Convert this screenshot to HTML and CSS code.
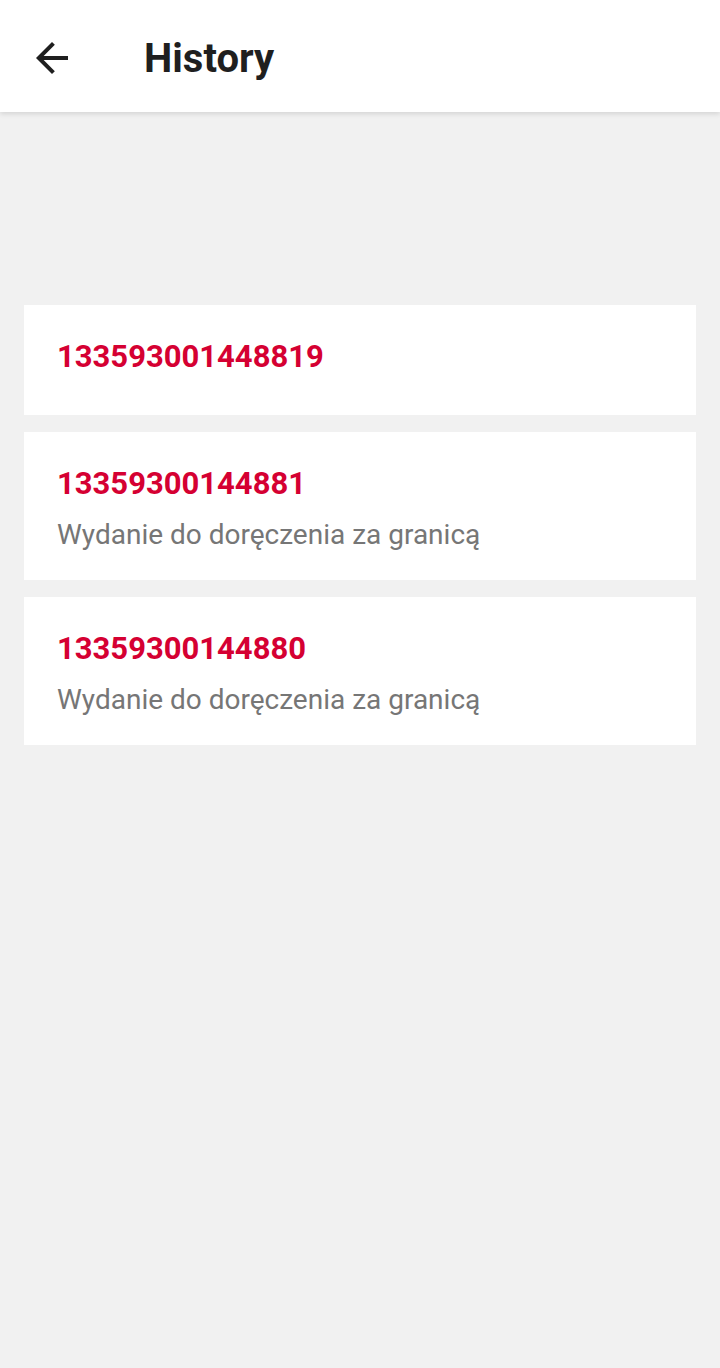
FILE: index.html
```html
<!DOCTYPE html>
<html>
<head>
    <title>History</title>
    <link rel="stylesheet" href="styles.css">
</head>
<body>

<div class="toolbar">
    <button class="back" aria-label="Back">
        <svg width="48" height="48" viewBox="0 0 24 24"><path d="M20 11H7.83l5.59-5.59L12 4l-8 8 8 8 1.41-1.41L7.83 13H20v-2z" fill="#1f1f1f"/></svg>
    </button>
    <h1 class="title">History</h1>
</div>

<div class="list">
    <div class="item">
        <div class="number">133593001448819</div>
    </div>
    <div class="item">
        <div class="number">13359300144881</div>
        <div class="status">Wydanie do doręczenia za granicą</div>
    </div>
    <div class="item">
        <div class="number">13359300144880</div>
        <div class="status">Wydanie do doręczenia za granicą</div>
    </div>
</div>

</body>
</html>
```

FILE: styles.css
```css
body { margin: 0; background-color: #f1f1f1; font-family: Roboto, "Liberation Sans", sans-serif; }
.toolbar { height: 112px; box-sizing: border-box; padding-top: 4px; background-color: #fff; display: flex; align-items: center; box-shadow: 0 2px 5px rgba(0,0,0,0.12); position: relative; }
.back { width: 56px; height: 56px; margin-left: 24px; padding: 0; border: none; background: none; display: flex; align-items: center; justify-content: center; }
.title { margin: 0 0 0 64px; font-size: 40px; font-weight: 700; color: #1f1f1f; }
.list { padding: 193px 24px 0; display: flex; flex-direction: column; gap: 17px; }
.item { background-color: #fff; padding: 31px 33px 28px; min-height: 110px; box-sizing: border-box; }
.number { font-size: 31px; font-weight: 700; color: #d50032; line-height: 42px; }
.status { font-size: 28px; color: #767676; line-height: 34px; margin-top: 13px; }
```
